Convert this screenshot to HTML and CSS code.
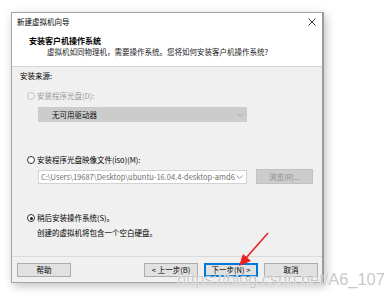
FILE: index.html
```html
<!DOCTYPE html>
<html lang="zh-CN">
<head>
  <meta charset="UTF-8" />
  <title>新建虚拟机向导</title>
  <link rel="stylesheet" href="styles.css">
</head>
<body>
  <div class="window">
    <div class="top">
      <div class="titlebar">
        <span>新建虚拟机向导</span>
        <svg class="close" width="8" height="8" viewBox="0 0 8 8"><path d="M0.5 0.5 L7.5 7.5 M7.5 0.5 L0.5 7.5" stroke="#333" stroke-width="1" fill="none"/></svg>
      </div>
      <div class="heading">安装客户机操作系统</div>
      <div class="subheading">虚拟机如同物理机，需要操作系统。您将如何安装客户机操作系统?</div>
    </div>

    <div class="body">
      <div class="section-label">安装来源:</div>

      <div class="option disabled opt-disc">
        <span class="radio"></span>
        <span>安装程序光盘(D):</span>
      </div>
      <div class="select filled">
        <span>无可用驱动器</span>
        <svg class="chev" width="7" height="4" viewBox="0 0 7 4"><path d="M0.5 0.5 L3.5 3.5 L6.5 0.5" stroke="#aaa" fill="none"/></svg>
      </div>

      <div class="option opt-iso">
        <span class="radio"></span>
        <span>安装程序光盘映像文件(iso)(M):</span>
      </div>
      <div class="path-row">
        <div class="select path">
          <span>C:\Users\19687\Desktop\ubuntu-16.04.4-desktop-amd6</span>
          <svg class="chev" width="7" height="4" viewBox="0 0 7 4"><path d="M0.5 0.5 L3.5 3.5 L6.5 0.5" stroke="#999" fill="none"/></svg>
        </div>
        <div class="browse">浏览(R)...</div>
      </div>

      <div class="option opt-later">
        <span class="radio checked"></span>
        <span>稍后安装操作系统(S)。</span>
      </div>
      <div class="note">创建的虚拟机将包含一个空白硬盘。</div>
    </div>

    <div class="footer">
      <div class="btn">帮助</div>
      <div class="spacer"></div>
      <div class="btn">&lt; 上一步(B)</div>
      <div class="btn primary">下一步(N) &gt;</div>
      <div class="btn">取消</div>
    </div>
  </div>

  <svg class="arrow" width="50" height="50" viewBox="0 0 50 50">
    <path d="M34 2 L12 27" stroke="#e8211f" stroke-width="1.6" fill="none"/>
    <path d="M5 35 L9 23 L17 30 Z" fill="#e8211f"/>
  </svg>

  <div class="watermark">https://blog.csdn.net/A6_107</div>
</body>
</html>
```

FILE: styles.css
```css
body {
  margin: 0;
  background-color: #fff;
  font-family: "Noto Sans CJK SC", "Microsoft YaHei", sans-serif;
  font-size: 7.5px;
  color: #000;
  width: 385px;
  height: 300px;
  overflow: hidden;
  position: relative;
}

.window {
  margin: 12px 0 0 11px;
  width: 313px;
  height: 271px;
  box-sizing: border-box;
  border: 1px solid #a4a4a4;
  border-right: 2px solid #9a9a9a;
  background-color: #f0f0f0;
  box-shadow: 2px 3px 9px rgba(0, 0, 0, 0.25);
  display: flex;
  flex-direction: column;
}

.top {
  background-color: #fff;
  border-bottom: 1px solid #d6d6d6;
  height: 54px;
  box-sizing: border-box;
}
.titlebar {
  height: 18px;
  line-height: 18px;
  padding-left: 5px;
  display: flex;
  align-items: center;
  justify-content: space-between;
  padding-right: 6px;
}
.close {
  display: block;
}
.heading {
  margin-top: 5px;
  padding-left: 17px;
  line-height: 10px;
  font-size: 8px;
  font-weight: bold;
}
.subheading {
  margin-top: 1px;
  padding-left: 35px;
  line-height: 10px;
  color: #1a1a1a;
}

.body {
  height: 190px;
  border-bottom: 1px solid #dadada;
  box-sizing: border-box;
  padding-top: 4px;
}
.section-label {
  padding-left: 8px;
  line-height: 10px;
}

.option {
  display: flex;
  align-items: center;
  gap: 2px;
  padding-left: 15px;
  line-height: 10px;
}
.opt-disc { margin-top: 10px; }
.opt-iso { margin-top: 33px; }
.opt-later { margin-top: 29px; }
.option.disabled {
  color: #9a9a9a;
}
.radio {
  width: 8px;
  height: 8px;
  box-sizing: border-box;
  border: 1px solid #333;
  border-radius: 50%;
  background-color: #fff;
  position: relative;
}
.disabled .radio {
  border-color: #c4c4c4;
  background-color: #f0f0f0;
}
.radio.checked::after {
  content: "";
  position: absolute;
  left: 1.5px;
  top: 1.5px;
  width: 3px;
  height: 3px;
  border-radius: 50%;
  background-color: #222;
}

.select {
  margin-left: 26px;
  width: 209px;
  box-sizing: border-box;
  display: flex;
  align-items: center;
  justify-content: space-between;
  padding-right: 3px;
}
.select.filled {
  margin-top: 6px;
  height: 15px;
  background-color: #cccccc;
  padding-left: 14px;
  color: #111;
}
.path-row {
  margin-top: 4px;
  display: flex;
  align-items: center;
  gap: 9px;
}
.select.path {
  height: 14px;
  background-color: #fff;
  border: 1px solid #d2d2d2;
  padding-left: 2px;
  color: #6e6e6e;
  white-space: nowrap;
  overflow: hidden;
}
.select.path span {
  overflow: hidden;
}
.chev {
  flex-shrink: 0;
  display: block;
}
.browse {
  width: 57px;
  height: 15px;
  box-sizing: border-box;
  background-color: #cccccc;
  border: 1px solid #c2c2c2;
  color: #8c8c8c;
  text-align: center;
  line-height: 13px;
}

.note {
  margin-top: 5px;
  padding-left: 25px;
  line-height: 10px;
}

.footer {
  flex: 1;
  display: flex;
  align-items: flex-start;
  padding: 6px 4px 0 5px;
  gap: 6px;
}
.spacer {
  flex: 1;
}
.btn {
  width: 54px;
  height: 14px;
  box-sizing: border-box;
  background-color: #e1e1e1;
  border: 1px solid #adadad;
  text-align: center;
  line-height: 12px;
}
.btn.primary {
  width: 54px;
  border: 1px solid #0078d7;
  box-shadow: inset 0 0 0 1px #0078d7;
}

.arrow {
  position: absolute;
  left: 234px;
  top: 231px;
}

.watermark {
  position: absolute;
  left: 177px;
  top: 270px;
  font-family: "Liberation Sans", Arial, sans-serif;
  font-size: 16.4px;
  color: rgba(190, 190, 190, 0.85);
  text-shadow: 0 0 1px #fff, 0 0 1px #fff;
  white-space: nowrap;
}
```
